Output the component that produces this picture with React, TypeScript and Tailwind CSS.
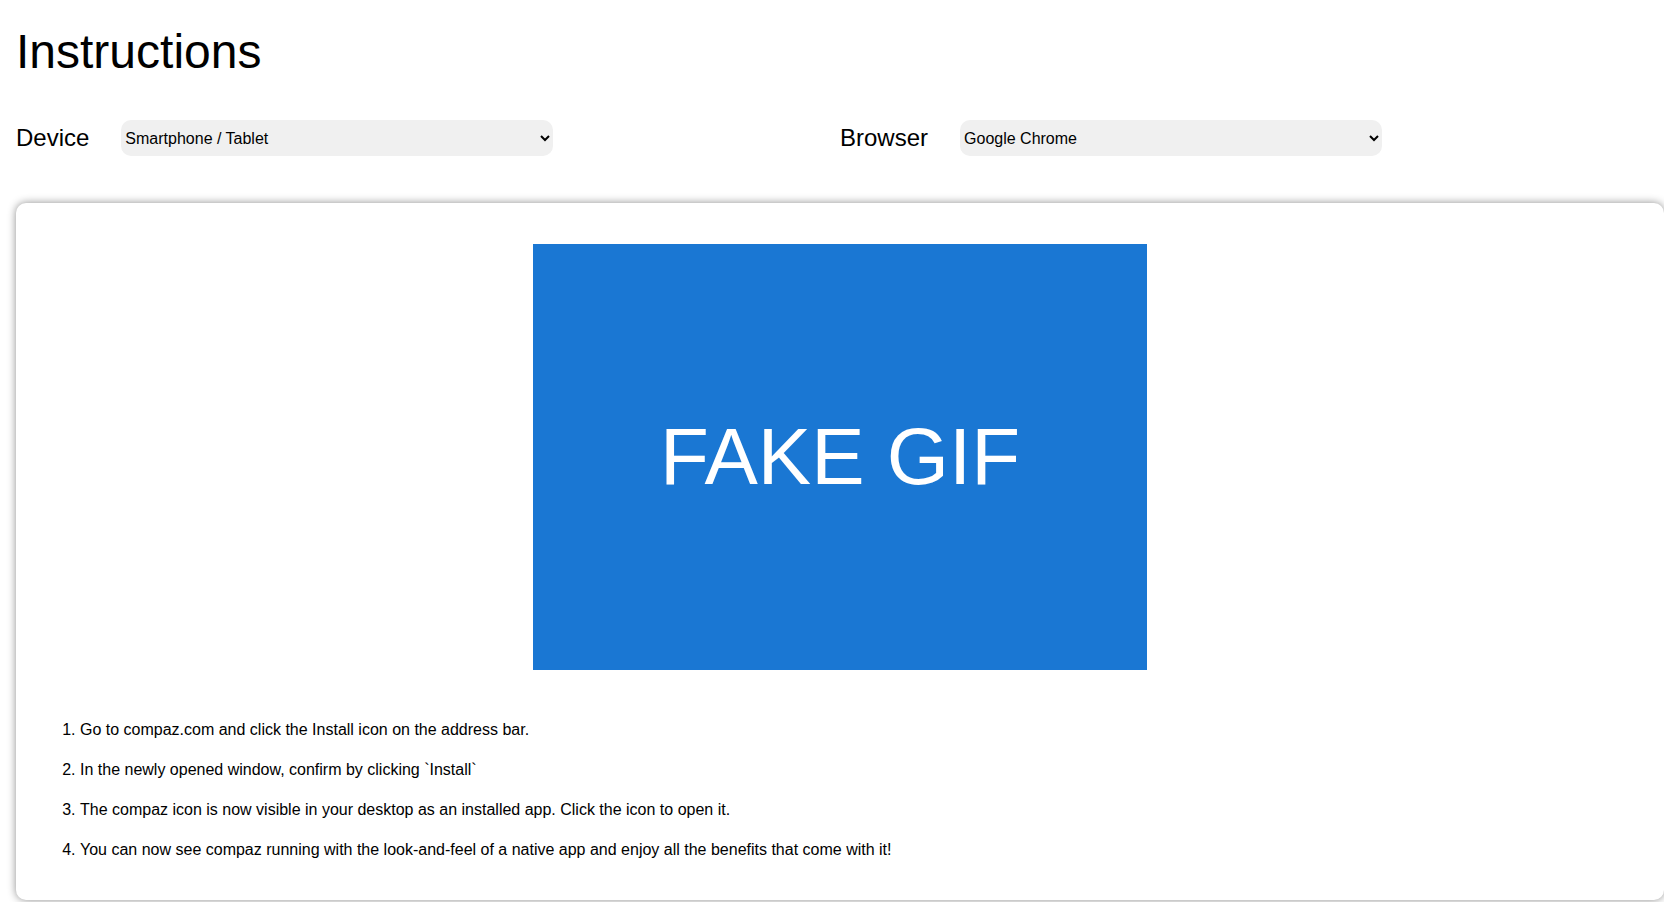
import { useState } from 'react';

const STEPS = [
  'Go to compaz.com and click the Install icon on the address bar.',
  'In the newly opened window, confirm by clicking `Install`',
  'The compaz icon is now visible in your desktop as an installed app. Click the icon to open it.',
  'You can now see compaz running with the look-and-feel of a native app and enjoy all the benefits that come with it!',
];

export default function App() {
  const [device, setDevice] = useState('mobile');
  const [browser, setBrowser] = useState('chrome');

  return (
    <div className="min-h-screen bg-white pl-4 text-black" style={{ fontFamily: '"Liberation Sans", Arial, sans-serif' }}>
      <h1 className="pt-[24px] text-[48px] leading-[56px] font-normal">Instructions</h1>

      <div className="mt-[40px] grid grid-cols-2">
        <div className="flex items-center gap-8">
          <label htmlFor="device" className="text-2xl">Device</label>
          <select
            id="device"
            value={device}
            onChange={(e) => setDevice(e.target.value)}
            className="h-9 w-[432px] rounded-[10px] bg-[#f0f0f0] pr-[6px] text-base"
          >
            <option value="mobile">Smartphone / Tablet</option>
            <option value="desktop">Desktop</option>
          </select>
        </div>
        <div className="flex items-center gap-8">
          <label htmlFor="browser" className="text-2xl">Browser</label>
          <select
            id="browser"
            value={browser}
            onChange={(e) => setBrowser(e.target.value)}
            className="h-9 w-[422px] rounded-[10px] bg-[#f0f0f0] pr-[6px] text-base"
          >
            <option value="chrome">Google Chrome</option>
            <option value="edge">Microsoft Edge</option>
            <option value="safari">Safari</option>
          </select>
        </div>
      </div>

      <div className="mt-[47px] rounded-[10px] bg-white pt-[41px] pb-[38px] pl-6 shadow-[0_0_8px_rgba(0,0,0,0.45)]">
        <div className="flex justify-center pr-6">
          <div className="flex h-[426px] w-[614px] items-center justify-center bg-[#1a77d3] text-[80px] leading-none text-white">
            FAKE GIF
          </div>
        </div>
        <ol className="mt-[48px] flex list-decimal flex-col gap-4 pl-10 text-base leading-6">
          {STEPS.map((step) => (
            <li key={step}>{step}</li>
          ))}
        </ol>
      </div>
    </div>
  );
}
